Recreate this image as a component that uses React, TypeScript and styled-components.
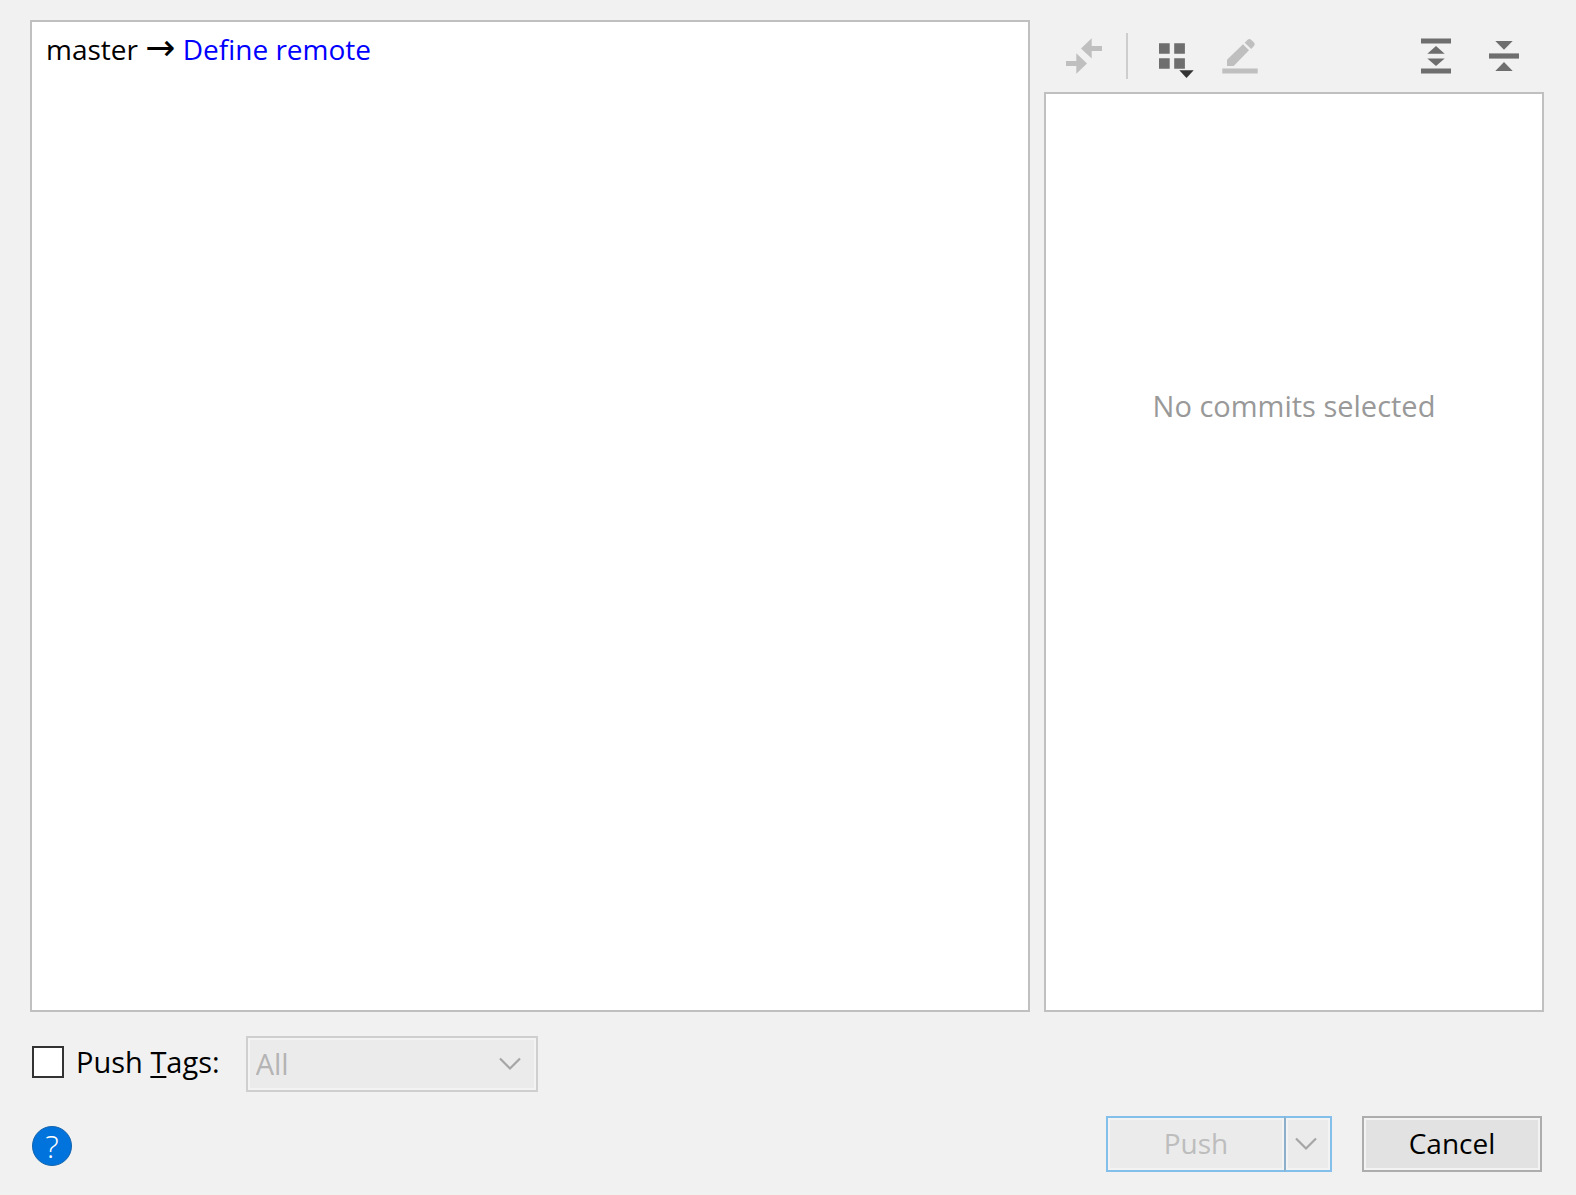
import React from "react";
import styled, { createGlobalStyle } from "styled-components";

const GlobalStyle = createGlobalStyle`
  *, *::before, *::after { box-sizing: border-box; }
  body {
    margin: 0;
    background: #f1f1f1;
    color: #000;
    font: 28px/38px "Open Sans", "Noto Sans", sans-serif;
  }
  button, select, input { font: inherit; color: inherit; margin: 0; }
`;

const Dialog = styled.form`
  display: flex;
  flex-direction: column;
  gap: 24px;
  min-height: 100vh;
  padding: 20px 32px 23px 30px;
`;

const Main = styled.main`
  flex: 1;
  display: grid;
  grid-template-columns: 2fr 1fr;
  gap: 14px;
`;

const Panel = styled.section`
  border: 2px solid #c0c0c0;
  background: #fff;
`;

const BranchPanel = styled(Panel)`
  padding: 8px 14px;
`;

const Arrow = styled.span`
  font: 36px/28px "DejaVu Sans", sans-serif;
`;

const RemoteLink = styled.a`
  color: #00f;
  text-decoration: none;
`;

const Side = styled.div`
  display: flex;
  flex-direction: column;
`;

const CommitPanel = styled(Panel)`
  flex: 1;
  display: flex;
  flex-direction: column;
  align-items: center;
  color: #999;
  font-size: 29px;
  &::before { content: ""; flex: 1; }
  &::after { content: ""; flex: 2; }
`;

const Toolbar = styled.div`
  display: flex;
  align-items: center;
  height: 72px;
  padding: 0 6px;
`;

const ToolButton = styled.button`
  display: flex;
  align-items: center;
  justify-content: center;
  width: 68px;
  height: 68px;
  padding: 0;
  border: 0;
  background: none;
  color: #6e6e6e;
  &:disabled { color: #bfbfbf; }
`;

const Separator = styled.span`
  width: 2px;
  height: 46px;
  margin: 0 10px 0 8px;
  background: #cdcdcd;
`;

const Spacer = styled.span`
  flex: 1;
`;

const Options = styled.div`
  display: flex;
  gap: 26px;
  padding-left: 2px;
  font-size: 29px;
`;

const CheckLabel = styled.label`
  display: flex;
  align-items: center;
  gap: 12px;
  height: 52px;
`;

const Checkbox = styled.input`
  appearance: none;
  width: 32px;
  height: 32px;
  border: 2px solid #333;
  background: #fff;
`;

const Mnemonic = styled.u`
  text-decoration-thickness: 2px;
  text-underline-offset: 3px;
  text-decoration-skip-ink: none;
`;

const SelectBox = styled.div`
  display: grid;
  align-items: center;
  width: 292px;
  height: 56px;
  > * { grid-area: 1 / 1; }
  > svg { justify-self: end; margin-right: 16px; pointer-events: none; }
`;

const Select = styled.select`
  appearance: none;
  width: 100%;
  height: 100%;
  padding: 0 8px;
  border: 2px solid #cfcfcf;
  border-radius: 0;
  background: #ebebeb;
  box-shadow: inset 0 0 0 2px #f3f3f3;
  &:disabled { color: #b4b4b4; opacity: 1; }
`;

const Footer = styled.footer`
  display: flex;
  align-items: center;
  gap: 30px;
  padding: 0 2px;
`;

const HelpButton = styled.button`
  width: 40px;
  height: 40px;
  margin-top: 4px;
  margin-right: auto;
  padding: 0;
  border: 1px solid #1565ad;
  border-radius: 50%;
  background: #0073dc;
  color: #fff;
  font-size: 32px;
  font-weight: 300;
`;

const Button = styled.button`
  width: 180px;
  height: 56px;
  padding: 0 0 2px;
  border: 2px solid #adadad;
  background: #e2e2e2;
  box-shadow: inset 0 0 0 2px #f3f3f3;
`;

const SplitButton = styled.div`
  display: flex;
`;

const PushButton = styled(Button)`
  width: 178px;
  border-color: #83bfeb;
  border-right: 0;
  background: #ebebeb;
  &:disabled { color: #bdbdbd; }
`;

const PushMenuButton = styled(PushButton)`
  display: flex;
  align-items: center;
  justify-content: center;
  width: 48px;
  padding: 0 4px 0 0;
  border-right: 2px solid #83bfeb;
  border-left: 2px solid #8cb0ca;
`;

function Icon({ children }: { children: React.ReactNode }) {
  return (
    <svg width="48" height="48" viewBox="0 0 48 48" fill="currentColor" aria-hidden="true">
      {children}
    </svg>
  );
}

function Chevron() {
  return (
    <svg width="24" height="14" viewBox="0 0 24 14" fill="none" stroke="#a5a5a5" strokeWidth="2.2" aria-hidden="true">
      <path d="M2 1.5 12 11.5 22 1.5" />
    </svg>
  );
}

export default function App() {
  return (
    <>
      <GlobalStyle />
      <Dialog onSubmit={(e) => e.preventDefault()}>
        <Main>
          <BranchPanel>
            master <Arrow>→</Arrow> <RemoteLink href="#remote">Define remote</RemoteLink>
          </BranchPanel>
          <Side>
            <Toolbar role="toolbar">
              <ToolButton type="button" disabled aria-label="Show Diff">
                <Icon>
                  <path d="M21 16.5 31.7 6.2V14H42v5H31.7v7.5Z" />
                  <path d="M27 31.5 16.3 21.2V29H6v5h10.3v7.8Z" />
                </Icon>
              </ToolButton>
              <Separator />
              <ToolButton type="button" aria-label="Group By">
                <Icon>
                  <path d="M11 11.2h10.7v10.6H11ZM26.2 11.2h10.7v10.6H26.2ZM11 26.2h10.7v10.6H11ZM26.2 26.2h10.7v10.6H26.2Z" />
                  <path fill="#333" d="M31.3 38.3h14.4L38.5 46Z" />
                </Icon>
              </ToolButton>
              <ToolButton type="button" disabled aria-label="Edit Source">
                <Icon>
                  <path d="M6.3 36.4h35.4v5.2H6.3Z" />
                  <path d="M11 34v-6.3L27 12.3l6 6L17.7 34Z" />
                  <path d="m28.7 10.7 2.7-2.8q2-1.8 4 0l2.6 2.6q1.6 1.8 0 3.5l-2.8 2.9Z" />
                </Icon>
              </ToolButton>
              <Spacer />
              <ToolButton type="button" aria-label="Expand All">
                <Icon>
                  <path d="M9 6.4h30v5.2H9ZM9 36.4h30v5.2H9Z" />
                  <path d="m24 14 8.7 7.7H15.3ZM15.3 26.4h17.4L24 34Z" />
                </Icon>
              </ToolButton>
              <ToolButton type="button" aria-label="Collapse All">
                <Icon>
                  <path d="M9 21.4h30v5.2H9Z" />
                  <path d="M15.3 9h17.4L24 17.7ZM24 30l8.7 9H15.3Z" />
                </Icon>
              </ToolButton>
            </Toolbar>
            <CommitPanel>No commits selected</CommitPanel>
          </Side>
        </Main>
        <Options>
          <CheckLabel>
            <Checkbox type="checkbox" />
            <span>
              Push <Mnemonic>T</Mnemonic>ags:
            </span>
          </CheckLabel>
          <SelectBox>
            <Select disabled aria-label="Tags to push" defaultValue="All">
              <option>All</option>
            </Select>
            <Chevron />
          </SelectBox>
        </Options>
        <Footer>
          <HelpButton type="button">?</HelpButton>
          <SplitButton>
            <PushButton type="submit" disabled>
              Push
            </PushButton>
            <PushMenuButton type="button" disabled aria-label="More push actions">
              <Chevron />
            </PushMenuButton>
          </SplitButton>
          <Button type="button">Cancel</Button>
        </Footer>
      </Dialog>
    </>
  );
}
